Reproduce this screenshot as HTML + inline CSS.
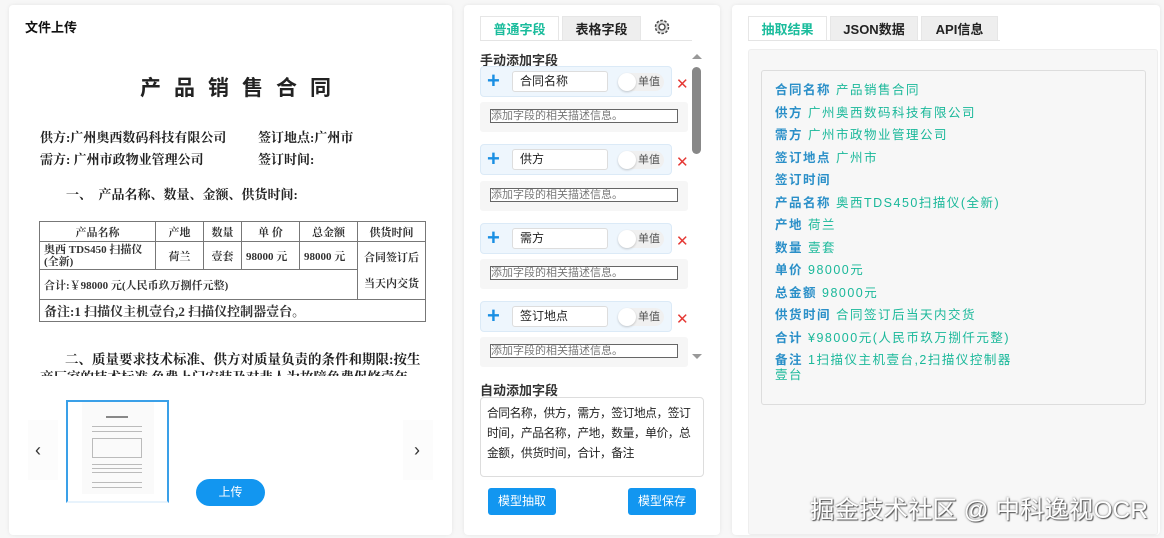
<!DOCTYPE html>
<html><head><meta charset="utf-8"><style>
*{box-sizing:border-box;margin:0;padding:0}
body{width:1164px;height:538px;background:#f7f7f7;font-family:"Liberation Sans","Noto Sans CJK SC",sans-serif;position:relative;overflow:hidden;color:#222}
.abs{position:absolute}
.panel{position:absolute;background:#fff;border-radius:4px;box-shadow:0 0 4px rgba(0,0,0,.08)}
.doc{font-family:"Liberation Serif","Noto Serif CJK SC",serif;color:#222;font-size:13px;font-weight:bold}
table.t{border-collapse:collapse;font-family:"Liberation Serif","Noto Serif CJK SC",serif;font-size:11px;color:#333;font-weight:bold}
table.t td{border:1px solid #777;padding:0 4px;height:20px}
.tab{position:absolute;top:16px;height:25px;font-size:13px;font-weight:bold;text-align:center;line-height:25px;background:#eee;border:1px solid #e6e6e6;border-bottom:none}
.tab.on{background:#fff;color:#1abc9c}
.fld{position:absolute;left:480px;width:192px;height:31px;background:#eef6fd;border:1px solid #dbeaf7;border-radius:4px}
.fld .plus{position:absolute;left:6px;top:1px;color:#1a8fe3;font-size:22px;font-weight:bold;line-height:26px}
.fld .in{position:absolute;left:31px;top:4px;width:96px;height:21px;background:#fff;border:1px solid #ddd;border-radius:3px;font-size:12px;padding-left:7px;line-height:19px}
.fld .tg{position:absolute;left:137px;top:6px;width:46px;height:18px;background:#f0f0f0;border-radius:9px;font-size:11px;color:#555;line-height:18px;padding-left:20px}
.fld .tg:before{content:"";position:absolute;left:0;top:0;width:18px;height:18px;border-radius:50%;background:#fff;box-shadow:0 1px 2px rgba(0,0,0,.2)}
.fld .x{position:absolute;left:195px;top:8px;color:#e53935;font-size:15px}
.desc{position:absolute;left:480px;width:208px;height:30px;background:#f6f6f6;border-radius:3px}
.desc div{position:absolute;left:10px;top:7px;width:188px;height:14px;border:1px solid #666;background:#fff;font-size:11px;color:#777;line-height:12px}
.btn{position:absolute;background:#1296f0;color:#fff;font-size:12px;text-align:center;border-radius:3px}
.res{font-size:12.5px;line-height:22.5px;letter-spacing:1.5px}
.res b{color:#2a8fc8}
.res span{color:#1ab89a}
.ln{position:absolute;height:1px;background:#bbb}
</style></head><body>

<div class="panel" style="left:9px;top:5px;width:443px;height:530px"></div>
<div class="abs" style="left:25px;top:17px;font-size:13px;font-weight:bold;color:#111">文件上传</div>

<div class="abs doc" style="left:12px;top:72px;width:460px;text-align:center;font-size:21px;font-weight:bold;letter-spacing:13px;font-family:'Noto Sans CJK SC',sans-serif">产品销售合同</div>
<div class="abs doc" style="left:40px;top:127px">供方:广州奥西数码科技有限公司</div>
<div class="abs doc" style="left:258px;top:127px">签订地点:广州市</div>
<div class="abs doc" style="left:40px;top:149px">需方: 广州市政物业管理公司</div>
<div class="abs doc" style="left:258px;top:149px">签订时间:</div>
<div class="abs doc" style="left:66px;top:184px">一、&nbsp; 产品名称、数量、金额、供货时间:</div>
<table class="t abs" style="left:39px;top:221px;width:387px">
<tr><td style="width:116px;text-align:center">产品名称</td><td style="width:48px;text-align:center">产地</td><td style="width:38px;text-align:center">数量</td><td style="width:58px;text-align:center">单 价</td><td style="width:58px;text-align:center">总金额</td><td style="text-align:center">供货时间</td></tr>
<tr><td style="line-height:12px;height:28px">奥西 TDS450 扫描仪<br>(全新)</td><td style="text-align:center">荷兰</td><td style="text-align:center">壹套</td><td>98000 元</td><td>98000 元</td><td rowspan="2" style="line-height:26px;text-align:center">合同签订后<br>当天内交货</td></tr>
<tr><td colspan="5" style="height:30px">合计:￥98000 元(人民币玖万捌仟元整)</td></tr>
<tr><td colspan="6" style="height:22px;font-size:13px">备注:1 扫描仪主机壹台,2 扫描仪控制器壹台。</td></tr>
</table>
<div class="abs doc" style="left:65px;top:348px;font-size:13.5px;font-weight:bold">二、质量要求技术标准、供方对质量负责的条件和期限:按生</div>
<div class="abs" style="left:40px;top:368px;width:380px;height:8px;overflow:hidden"><div class="doc" style="font-size:13.5px;font-weight:bold;margin-top:-2px">产厂家的技术标准,免费上门安装及对非人为故障免费保修壹年</div></div>

<div class="abs" style="left:28px;top:420px;width:30px;height:60px;background:#fcfcfc"></div>
<div class="abs" style="left:35px;top:440px;font-size:18px;color:#333">‹</div>
<div class="abs" style="left:403px;top:420px;width:30px;height:60px;background:#fcfcfc"></div>
<div class="abs" style="left:414px;top:440px;font-size:18px;color:#333">›</div>
<div class="abs" style="left:66px;top:400px;width:103px;height:103px;border:2px solid #3aa0e8;border-bottom-color:#e8f3fc;background:#fff">
  <div class="abs" style="left:14px;top:0;width:72px;height:92px;background:#fafafa"></div>
  <div class="abs" style="left:38px;top:14px;width:22px;height:2px;background:#888"></div>
  <div class="ln" style="left:24px;top:24px;width:50px"></div>
  <div class="ln" style="left:24px;top:29px;width:50px"></div>
  <div class="abs" style="left:24px;top:36px;width:50px;height:20px;border:1px solid #bbb"></div>
  <div class="ln" style="left:24px;top:62px;width:50px"></div>
  <div class="ln" style="left:24px;top:66px;width:50px"></div>
  <div class="ln" style="left:24px;top:70px;width:50px"></div>
  <div class="ln" style="left:24px;top:80px;width:50px"></div>
  <div class="ln" style="left:24px;top:85px;width:50px"></div>
</div>
<div class="btn" style="left:196px;top:479px;width:69px;height:27px;border-radius:14px;line-height:27px">上传</div>

<div class="panel" style="left:464px;top:5px;width:256px;height:530px"></div>
<div class="tab on" style="left:480px;width:79px">普通字段</div>
<div class="tab" style="left:562px;width:79px">表格字段</div>
<div class="abs" style="left:480px;top:40px;width:212px;height:1px;background:#e4e4e4"></div>
<svg class="abs" style="left:653px;top:18px" width="18" height="18" viewBox="0 0 18 18"><circle cx="9" cy="9" r="6.5" fill="#ddd" stroke="#444" stroke-width="1.5" stroke-dasharray="2.5 1.6"/><circle cx="9" cy="9" r="3" fill="#fff" stroke="#444" stroke-width="1.3"/></svg>
<div class="abs" style="left:480px;top:50px;font-size:13px;font-weight:bold;color:#333">手动添加字段</div>
<div class="abs" style="left:692px;top:54px;width:0;height:0;border-left:5px solid transparent;border-right:5px solid transparent;border-bottom:5px solid #999"></div>
<div class="abs" style="left:692px;top:67px;width:9px;height:87px;background:#888;border-radius:5px"></div>
<div class="abs" style="left:692px;top:354px;width:0;height:0;border-left:5px solid transparent;border-right:5px solid transparent;border-top:5px solid #999"></div>

<div class="fld" style="top:66px"><span class="plus">+</span><div class="in">合同名称</div><div class="tg">单值</div><span class="x">✕</span></div>
<div class="desc" style="top:102px"><div>添加字段的相关描述信息。</div></div>
<div class="fld" style="top:144px"><span class="plus">+</span><div class="in">供方</div><div class="tg">单值</div><span class="x">✕</span></div>
<div class="desc" style="top:181px"><div>添加字段的相关描述信息。</div></div>
<div class="fld" style="top:223px"><span class="plus">+</span><div class="in">需方</div><div class="tg">单值</div><span class="x">✕</span></div>
<div class="desc" style="top:259px"><div>添加字段的相关描述信息。</div></div>
<div class="fld" style="top:301px"><span class="plus">+</span><div class="in">签订地点</div><div class="tg">单值</div><span class="x">✕</span></div>
<div class="desc" style="top:337px;height:30px"><div>添加字段的相关描述信息。</div></div>

<div class="abs" style="left:480px;top:380px;font-size:13px;font-weight:bold;color:#333">自动添加字段</div>
<div class="abs" style="left:480px;top:397px;width:224px;height:80px;border:1px solid #ddd;border-radius:4px;background:#fff;font-size:11.8px;line-height:20px;padding:5px 6px;color:#222;letter-spacing:-0.5px">合同名称，供方，需方，签订地点，签订时间，产品名称，产地，数量，单价，总金额，供货时间，合计，备注</div>
<div class="btn" style="left:488px;top:488px;width:68px;height:27px;line-height:27px">模型抽取</div>
<div class="btn" style="left:628px;top:488px;width:68px;height:27px;line-height:27px">模型保存</div>

<div class="panel" style="left:732px;top:5px;width:428px;height:530px"></div>
<div class="tab on" style="left:748px;width:79px">抽取结果</div>
<div class="tab" style="left:830px;width:88px">JSON数据</div>
<div class="tab" style="left:921px;width:77px">API信息</div>
<div class="abs" style="left:748px;top:40px;width:252px;height:1px;background:#e4e4e4"></div>
<div class="abs" style="left:748px;top:49px;width:410px;height:486px;background:#f7f7f7;border:1px solid #eee;border-radius:3px"></div>
<div class="abs" style="left:761px;top:70px;width:385px;height:335px;background:#f7f7f7;border:1px solid #ddd;border-radius:3px"></div>
<div class="abs res" style="left:775px;top:79px;width:250px">
<div><b>合同名称</b> <span>产品销售合同</span></div>
<div><b>供方</b> <span>广州奥西数码科技有限公司</span></div>
<div><b>需方</b> <span>广州市政物业管理公司</span></div>
<div><b>签订地点</b> <span>广州市</span></div>
<div><b>签订时间</b></div>
<div><b>产品名称</b> <span>奥西TDS450扫描仪(全新)</span></div>
<div><b>产地</b> <span>荷兰</span></div>
<div><b>数量</b> <span>壹套</span></div>
<div><b>单价</b> <span>98000元</span></div>
<div><b>总金额</b> <span>98000元</span></div>
<div><b>供货时间</b> <span>合同签订后当天内交货</span></div>
<div><b>合计</b> <span>¥98000元(人民币玖万捌仟元整)</span></div>
<div style="line-height:15px;margin-top:4px"><b>备注</b> <span>1扫描仪主机壹台,2扫描仪控制器</span><br><span>壹台</span></div>
</div>

<div class="abs" style="left:810px;top:491px;font-size:24.5px;color:#fff;text-shadow:1px 1px 1px #555,0 0 2px #777;white-space:nowrap">掘金技术社区 @ 中科逸视OCR</div>
</body></html>
